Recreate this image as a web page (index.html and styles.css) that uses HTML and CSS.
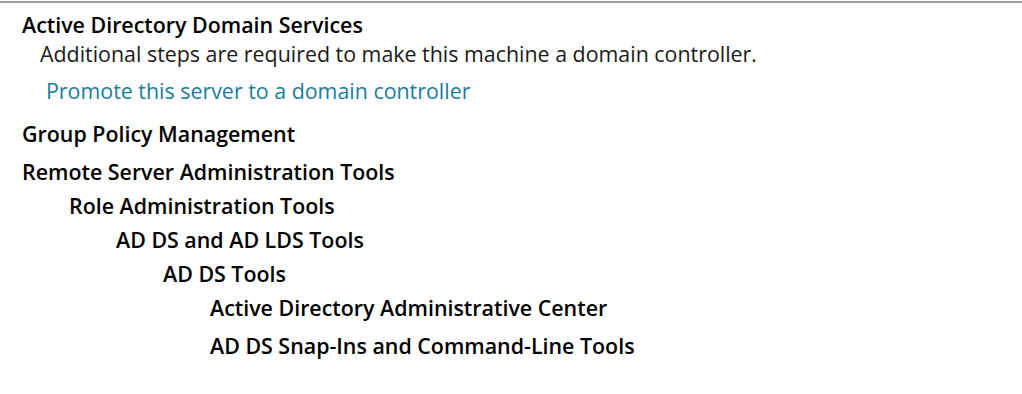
FILE: index.html
```html
<!DOCTYPE html>
<html lang="en">
<head>
    <meta charset="UTF-8">
    <meta name="viewport" content="width=device-width, initial-scale=1.0">
    <title>Features</title>
    <link rel="stylesheet" href="styles.css">
</head>
<body>
    <div class="panel">
        <ul class="feature-list">
            <li class="feature section">
                <div class="feature-name">Active Directory Domain Services</div>
                <div class="feature-desc">Additional steps are required to make this machine a domain controller.</div>
                <a class="feature-link" href="#">Promote this server to a domain controller</a>
            </li>
            <li class="feature">
                <div class="feature-name">Group Policy Management</div>
            </li>
            <li class="feature">
                <div class="feature-name">Remote Server Administration Tools</div>
                <ul class="sub-list">
                    <li class="feature">
                        <div class="feature-name">Role Administration Tools</div>
                        <ul class="sub-list">
                            <li class="feature">
                                <div class="feature-name">AD DS and AD LDS Tools</div>
                                <ul class="sub-list">
                                    <li class="feature">
                                        <div class="feature-name">AD DS Tools</div>
                                        <ul class="sub-list">
                                            <li class="feature">
                                                <div class="feature-name">Active Directory Administrative Center</div>
                                            </li>
                                            <li class="feature">
                                                <div class="feature-name">AD DS Snap-Ins and Command-Line Tools</div>
                                            </li>
                                        </ul>
                                    </li>
                                </ul>
                            </li>
                        </ul>
                    </li>
                </ul>
            </li>
        </ul>
    </div>
</body>
</html>
```
FILE: styles.css
```css
* {
    margin: 0;
    padding: 0;
    box-sizing: border-box;
}

body {
    background: #ffffff;
    font-family: "Open Sans", "Noto Sans", sans-serif;
    font-size: 21.4px;
    line-height: 28px;
    color: #1a1a1a;
}

.panel {
    margin-top: 1px;
    border-top: 2px solid #9c9c9c;
    padding: 8px 0 0 22px;
    min-height: 393px;
}

ul {
    list-style: none;
}

.feature + .feature {
    margin-top: 10px;
}

.feature.section + .feature {
    margin-top: 15px;
}

.feature-name {
    font-weight: 600;
    color: #000000;
}

.feature-desc {
    margin-left: 18px;
    margin-top: 1px;
}

.feature-link {
    display: block;
    margin: 9px 0 0 24px;
    color: #1b7c9c;
    text-decoration: none;
}

.sub-list {
    margin-top: 6px;
    padding-left: 47px;
}
```
